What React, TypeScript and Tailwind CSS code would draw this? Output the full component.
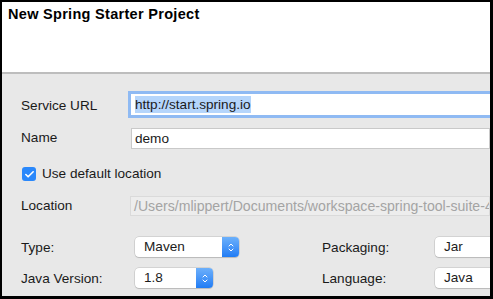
import { Check, ChevronUp, ChevronDown } from "lucide-react";

// macOS-style combo box with the blue stepper on the right
function Combo({ value, width }: { value: string; width: string }) {
  return (
    <div className={`flex h-[20px] shrink-0 rounded-[4px] bg-white shadow-[0_0_0_0.5px_rgba(0,0,0,0.18),0_1px_1px_rgba(0,0,0,0.12)] ${width}`}>
      <div className="flex-1 pl-[9px] leading-[20px] text-[#1c1c1c]">{value}</div>
      <div className="flex w-[17px] flex-col items-center justify-center rounded-r-[4px] bg-gradient-to-b from-[#6cb0fb] to-[#1f7cf4]">
        <ChevronUp className="-mb-[3px] h-[8px] w-[8px] text-white" strokeWidth={3} />
        <ChevronDown className="h-[8px] w-[8px] text-white" strokeWidth={3} />
      </div>
    </div>
  );
}

// combo that runs off the right edge of the window (stepper not visible)
function ClippedCombo({ value }: { value: string }) {
  return (
    <div className="h-[20px] w-[80px] shrink-0 rounded-[4px] bg-white pl-[9px] leading-[20px] text-[#1c1c1c] shadow-[0_0_0_0.5px_rgba(0,0,0,0.18),0_1px_1px_rgba(0,0,0,0.12)]">
      {value}
    </div>
  );
}

export default function App() {
  return (
    <div className="h-[299px] w-[493px] overflow-hidden bg-black pb-[3px] pl-[2px] pr-[3px] pt-[2px]">
      <div className="flex h-full flex-col overflow-hidden bg-[#e8e8e8] font-['Liberation_Sans',Arial,sans-serif] text-[13.6px] text-[#1a1a1a]">
        {/* Header */}
        <div className="h-[72px] shrink-0 border-b-2 border-[#bdbdbd] bg-white pl-[6px] pt-[5px]">
          <h1 className="text-[14.5px] font-bold leading-[15px] tracking-[0.3px] text-black">New Spring Starter Project</h1>
        </div>

        {/* Form */}
        <div className="flex flex-col pl-[19px]">
          <div className="mt-[20px] flex h-[21px] items-center">
            <div className="w-[110px] shrink-0 pt-[3px]">Service URL</div>
            <div className="flex h-[21px] flex-1 items-center bg-white pl-[4px] shadow-[0_0_0_3px_#8fbaf3]">
              <span className="bg-[#b5d5fb] leading-[17px]">http://start.spring.io</span>
            </div>
          </div>

          <div className="mt-[13px] flex h-[21px] items-center">
            <div className="w-[110px] shrink-0">Name</div>
            <div className="h-[21px] flex-1 border border-[#c9c9c9] bg-white pl-[3px] leading-[19px]">demo</div>
          </div>

          <div className="mt-[18px] flex h-[14px] items-center">
            <div className="ml-[1px] flex h-[14px] w-[14px] items-center justify-center rounded-[3px] bg-[#2a88fb]">
              <Check className="h-[11px] w-[11px] text-white" strokeWidth={3.5} />
            </div>
            <span className="ml-[6px]">Use default location</span>
          </div>

          <div className="mt-[15px] flex h-[20px] items-center">
            <div className="w-[109px] shrink-0">Location</div>
            <div className="h-[20px] flex-1 overflow-hidden whitespace-nowrap border border-[#dadada] bg-[#ededed] pl-[3px] text-[14.1px] leading-[18px] text-[#a4a4a4]">
              /Users/mlippert/Documents/workspace-spring-tool-suite-4
            </div>
          </div>

          <div className="mt-[21px] flex h-[20px] items-center">
            <div className="w-[114px] shrink-0 pt-[2px]">Type:</div>
            <Combo value="Maven" width="w-[104px]" />
            <div className="ml-[83px] w-[113px] shrink-0 pt-[2px]">Packaging:</div>
            <ClippedCombo value="Jar" />
          </div>

          <div className="mt-[11px] flex h-[20px] items-center">
            <div className="w-[114px] shrink-0 pt-[2px]">Java Version:</div>
            <Combo value="1.8" width="w-[78px]" />
            <div className="ml-[109px] w-[113px] shrink-0 pt-[2px]">Language:</div>
            <ClippedCombo value="Java" />
          </div>
        </div>
      </div>
    </div>
  );
}
